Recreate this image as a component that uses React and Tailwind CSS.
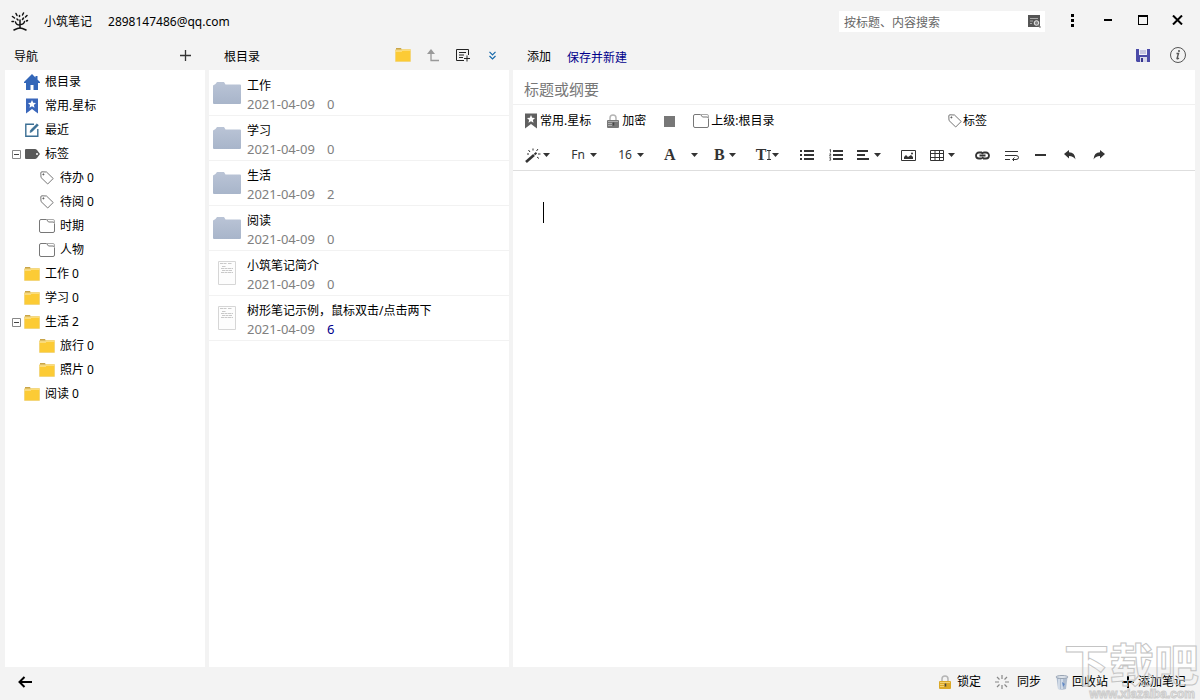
import React, { useState } from "react";

const treeItems = [
  { icon: "home", label: "根目录" },
  { icon: "star", label: "常用.星标" },
  { icon: "recent", label: "最近" },
  { icon: "solidTag", label: "标签", open: true },
  { icon: "tag", label: "待办 0", child: true },
  { icon: "tag", label: "待阅 0", child: true },
  { icon: "outline", label: "时期", child: true },
  { icon: "outline", label: "人物", child: true },
  { icon: "folder", label: "工作 0" },
  { icon: "folder", label: "学习 0" },
  { icon: "folder", label: "生活 2", open: true },
  { icon: "folder", label: "旅行 0", child: true },
  { icon: "folder", label: "照片 0", child: true },
  { icon: "folder", label: "阅读 0" },
];

const notes = [
  { title: "工作", count: 0, folder: true },
  { title: "学习", count: 0, folder: true },
  { title: "生活", count: 2, folder: true },
  { title: "阅读", count: 0, folder: true },
  { title: "小筑笔记简介", count: 0 },
  { title: "树形笔记示例，鼠标双击/点击两下", count: 6 },
];

function Folder() {
  return (
    <svg width="16" height="14" viewBox="0 0 16 14">
      <path d="M1 0h5l1 2H1z" fill="#c9a548" />
      <path d="M0 1.6h6.5l1-.6H15q1 0 1 1v11q0 1-1 1H1q-1 0-1-1z" fill="#f3d67c" />
      <path d="M1 3h6l1-1h7v11H1z" fill="#fccb35" />
      <path d="M.5 3.3h6.3l1-1h7.7" fill="none" stroke="#fbe6a0" strokeWidth=".8" />
    </svg>
  );
}

function OutlineFolder() {
  return (
    <svg width="16" height="14" viewBox="0 0 16 14" fill="none" stroke="#777">
      <path d="M.5 2Q.5.5 2 .5h5.5l2 2.5H14q1.500 0 1.500 1.500V12q0 1.500-1.500 1.500H2Q.5 13.500.5 12z" />
      <path d="M7.500.5H14q1.500 0 1.500 1.500v3" stroke="#aaa" />
    </svg>
  );
}

function Tag() {
  return (
    <svg width="14" height="14" viewBox="0 0 14 14" fill="none" stroke="#666" strokeWidth=".9">
      <path d="M.8 2Q.8.8 2 .8L6.500 1l6.700 6.500-5.500 5.500L1 6.500z" strokeLinejoin="round" />
      <circle cx="3.400" cy="3.400" r=".6" fill="#555" />
    </svg>
  );
}

function Bookmark({ color }) {
  return (
    <svg width="12" height="16" viewBox="0 0 12 16">
      <path d="M0 .5h12v15L6 11l-6 4.500z" fill={color} />
      <path d="m6 2 1.200 2.700 2.800.3-2.100 1.900.6 2.900L6 8.300 3.500 9.800l.6-2.900L2 5l2.800-.3z" fill="#fff" />
    </svg>
  );
}

function Lock({ color, light }) {
  return (
    <svg width="12" height="14" viewBox="0 0 12 14">
      <path d="M3 7V4a3 3 0 0 1 6 0v3" fill="none" stroke="#b5b5b5" strokeWidth="1.500" />
      <rect y="6" width="12" height="8" rx="1" fill={color} />
      <path d="M1 7.500h10M1 9.500h4M1 11.500h4" stroke={light} strokeWidth=".8" />
      <path d="M6.500 8.500v3" stroke="#444" strokeWidth="1.500" />
    </svg>
  );
}

function TreeIcon({ name }) {
  if (name === "folder") return <Folder />;
  if (name === "outline") return <OutlineFolder />;
  if (name === "tag") return <Tag />;
  if (name === "star") return <Bookmark color="#3a67bb" />;
  if (name === "home") {
    return (
      <svg width="16" height="16" viewBox="0 0 16 16" fill="#3366b8">
        <path d="M8 0 0 8v1h2v7h4.500v-5h3v5H14V9h2V8l-2.500-2.500V2h-2v1.500z" />
      </svg>
    );
  }
  if (name === "recent") {
    return (
      <svg width="14" height="14" viewBox="0 0 14 14" fill="none" stroke="#3b6f94" strokeWidth="1.400">
        <path d="M9 1.200H.8v12h12V6" />
        <path d="m5 9.500.6-2.500L12 .8l1.400 1.400L7 8.700z" fill="#3b6f94" strokeWidth=".6" />
      </svg>
    );
  }
  return (
    <svg width="15" height="10" viewBox="0 0 15 10">
      <path d="M1 0h9q1 0 2 1l3 4-3 4q-1 1-2 1H1q-1 0-1-1V1q0-1 1-1z" fill="#595959" />
      <circle cx="12" cy="5" r="1" fill="#fff" />
    </svg>
  );
}

function BigFolder() {
  return (
    <svg width="28" height="22" viewBox="0 0 28 22">
      <defs>
        <linearGradient id="folderFill" x1="0" y1="0" x2="0" y2="1">
          <stop offset="0" stopColor="#bac4d6" />
          <stop offset="1" stopColor="#a8b5ca" />
        </linearGradient>
      </defs>
      <path d="M0 3.500 2.500 2 4 0h7l1.500 2.500H27q1 0 1 1V21q0 1-1 1H1q-1 0-1-1z" fill="url(#folderFill)" />
    </svg>
  );
}

function Page() {
  return (
    <svg width="18" height="24" viewBox="0 0 18 24">
      <path d="M.5.5h17v23H.5z" fill="#fdfdfd" stroke="#d6d6d6" />
      <path d="M2 2.500h7M10 2.500h4M4 5.500h4M3 7.500h12M4 9.500h10M3 11.500h12" stroke="#bbb" strokeWidth=".8" strokeDasharray="3 .5" />
    </svg>
  );
}

function Caret() {
  return (
    <svg width="7" height="4" viewBox="0 0 7 4" fill="#333">
      <path d="M0 0h7L3.500 4z" />
    </svg>
  );
}

function Tool({ label, caret, children }) {
  return (
    <button type="button" aria-label={label} className="flex h-6 min-w-[15px] items-center justify-center gap-1">
      {children}
      {caret && <Caret />}
    </button>
  );
}

function Toolbar() {
  return (
    <div className="flex h-[33px] items-center gap-5 border-b border-[#dedede] px-3 pt-[2px] text-[#333]">
      <button type="button" aria-label="清除格式" className="flex h-6 items-center gap-[2px]">
        <svg width="16" height="15" viewBox="0 0 16 15" stroke="#333">
          <path d="m1 14 8-7" strokeWidth="2.600" />
          <path d="m9.500 6.500 2-1.700" strokeWidth="2" />
          <path d="M8 .5v2M3.500 2 5 4M13 1l-1.500 2M13 6h2.500M12 9l2 1.500M2 6h2" strokeWidth="1" />
        </svg>
        <Caret />
      </button>
      <Tool label="字体" caret><span className="w-4 text-xs">Fn</span></Tool>
      <Tool label="字号" caret><span className="w-4 text-xs">16</span></Tool>
      <div className="flex items-center gap-4">
        <button type="button" aria-label="颜色" className="flex h-6 w-[34px] items-center justify-between font-['Liberation_Serif'] text-base font-bold">
          A
          <Caret />
        </button>
        <Tool label="粗体" caret><span className="font-['Liberation_Serif'] text-base font-bold">B</span></Tool>
      </div>
      <button type="button" aria-label="标题" className="flex h-6 items-center font-['Liberation_Serif'] text-base font-bold">
        T
        <svg width="6" height="10" viewBox="0 0 6 10" fill="none" stroke="#333"><path d="M1 .5h4M1 9.500h4M3 .5v9" /></svg>
        <Caret />
      </button>
      <div className="flex items-center gap-[14px]">
        <Tool label="无序列表">
          <svg width="14" height="10" viewBox="0 0 14 10" fill="#333">
            <path d="M0 0h2v2H0zM0 4h2v2H0zM0 8h2v2H0zM4 0h10v2H4zM4 4h10v2H4zM4 8h10v2H4z" />
          </svg>
        </Tool>
        <Tool label="有序列表">
          <svg width="14" height="12" viewBox="0 0 14 12" fill="#333">
            <path d="M4 1h10v2H4zM4 5h10v2H4zM4 9h10v2H4z" />
            <path d="M.5 1 1.500.5V3.500M.3 5h1.700L.5 7H2.200M.3 8.700h1.500L1 10q1 0 .8 1-.5.7-1.500.2" fill="none" stroke="#333" strokeWidth=".8" />
          </svg>
        </Tool>
        <Tool label="对齐" caret>
          <svg width="13" height="10" viewBox="0 0 13 10" fill="#333"><path d="M0 0h11v2H0zM0 4h8v2H0zM0 8h12v2H0z" /></svg>
        </Tool>
      </div>
      <div className="flex items-center gap-[14px]">
        <Tool label="图片">
          <svg width="15" height="11" viewBox="0 0 15 11">
            <path d="M.5.5h14v10H.5z" fill="none" stroke="#333" />
            <path d="M3 9V7l2-2 2 2 3-2 2 2v2z" fill="#333" />
            <circle cx="11" cy="3.500" r="1" fill="#333" />
          </svg>
        </Tool>
        <Tool label="表格" caret>
          <svg width="14" height="11" viewBox="0 0 14 11" fill="none" stroke="#333">
            <path d="M.5.5h13v10H.5zM0 3.500h14M0 7.500h14M5 0v11M9.500 0v11" />
          </svg>
        </Tool>
      </div>
      <div className="flex items-center gap-[14px]">
        <Tool label="链接">
          <svg width="15" height="9" viewBox="0 0 15 9" fill="none" stroke="#333" strokeWidth="1.800">
            <path d="M7 1.500H4a3 3 0 0 0 0 6h2q1.500 0 2-1.500M8 7.500h3a3 3 0 0 0 0-6H9Q7.500 1.500 7 3M4.500 4.500h6" />
          </svg>
        </Tool>
        <Tool label="换行">
          <svg width="14" height="11" viewBox="0 0 14 11" fill="none" stroke="#333">
            <path d="M0 1.500h13M0 5.500h11q2.500 0 2.500 2t-2.500 2H8M0 9.500h5M9.500 7.500l-2 2 2 2" />
          </svg>
        </Tool>
        <Tool label="分隔线">
          <svg width="11" height="2" viewBox="0 0 11 2"><path d="M0 0h11v2H0z" fill="#333" /></svg>
        </Tool>
        <Tool label="撤销">
          <svg width="12" height="10" viewBox="0 0 12 10"><path d="M0 4 5 0v2.300q6 0 6.500 7.200Q9.500 6 5 6v2.500z" fill="#333" /></svg>
        </Tool>
        <Tool label="重做">
          <svg width="12" height="10" viewBox="0 0 12 10"><path d="M12 4 7 0v2.300q-6 0-6.500 7.200Q2.500 6 7 6v2.500z" fill="#333" /></svg>
        </Tool>
      </div>
    </div>
  );
}

function Header() {
  return (
    <header className="flex h-[42px] shrink-0 items-center pr-[5px] pl-[11px]">
      <svg width="18" height="19" viewBox="0 0 18 19" fill="none" stroke="#111" strokeWidth="1.500" strokeLinecap="round">
        <path d="M9 16V8M9 13Q5 13 4.500 10M9 12.500q4 0 4.500-3" />
        <path d="M3 18q4-2 6-2t6 2" />
        <path d="M8.500 4.500v-1M5 1.500l1 2M12.500 1 11.500 3M1.500 4.500l2 1.500M1 9.500h1.500M16 3.500 14.500 5M16.500 8.500l-1 .5M6 7l1 1M12.500 6l-1 1.500" />
      </svg>
      <h1 className="ml-[15px] pt-[2px]">小筑笔记</h1>
      <span className="ml-4 pt-[2px]">2898147486@qq.com</span>
      <div className="ml-auto flex h-[21px] w-[206px] items-center bg-white pr-1 pl-[5px]">
        <input
          aria-label="搜索"
          placeholder="按标题、内容搜索"
          className="min-w-0 flex-1 pt-[3px] text-xs placeholder:text-[#666] focus:outline-none"
        />
        <button type="button" aria-label="开始搜索">
          <svg width="13" height="13" viewBox="0 0 13 13">
            <path d="M0 0h12v12H0z" fill="#555" />
            <path d="M2 3.500h8M2 6h3M2 8.500h2" stroke="#aaa" />
            <circle cx="8.500" cy="8" r="2.300" fill="#888" stroke="#eee" />
            <path d="m10 10 2.500 2.500" stroke="#777" strokeWidth="1.500" />
          </svg>
        </button>
      </div>
      <div className="ml-[10px] flex pb-[2px]">
        <button type="button" aria-label="菜单" className="flex h-8 w-[35px] items-center justify-center">
          <svg width="3" height="13" viewBox="0 0 3 13"><path d="M0 0h3v3H0zM0 5h3v3H0zM0 10h3v3H0z" /></svg>
        </button>
        <button type="button" aria-label="最小化" className="flex h-8 w-[35px] items-center justify-center">
          <svg width="8" height="2" viewBox="0 0 8 2"><path d="M0 0h8v2H0z" /></svg>
        </button>
        <button type="button" aria-label="最大化" className="flex h-8 w-[35px] items-center justify-center">
          <svg width="10" height="10" viewBox="0 0 10 10"><path d="M0 0h10v10H0zM1 2v7h8V2z" fillRule="evenodd" /></svg>
        </button>
        <button type="button" aria-label="关闭" className="flex h-8 w-[35px] items-center justify-center">
          <svg width="11" height="10" viewBox="0 0 11 10" stroke="#000" strokeWidth="2"><path d="m1 .5 9 9M10 .5l-9 9" /></svg>
        </button>
      </div>
    </header>
  );
}

function Sidebar() {
  return (
    <nav className="flex w-[200px] shrink-0 flex-col" aria-label="导航">
      <div className="flex h-7 items-center justify-between pr-[14px] pl-[9px]">
        <h2 className="pt-[2px]">导航</h2>
        <button type="button" aria-label="新增" className="pb-[2px]">
          <svg width="11" height="11" viewBox="0 0 11 11" stroke="#333" strokeWidth="1.300"><path d="M5.500 0v11M0 5.500h11" /></svg>
        </button>
      </div>
      <ul className="flex-1 bg-white">
        {treeItems.map((item) => (
          <li key={item.label} className={item.child ? "flex h-6 items-center pl-[34px]" : "flex h-6 items-center pl-[7px]"}>
            {!item.child && (
              <span className="mr-[2px] w-[9px]">
                {item.open && (
                  <button type="button" aria-label={`折叠${item.label}`} className="block">
                    <svg width="9" height="9" viewBox="0 0 9 9" fill="none" stroke="#888">
                      <path d="M.5.5h8v8h-8z" />
                      <path d="M2 4.500h5" stroke="#444" />
                    </svg>
                  </button>
                )}
              </span>
            )}
            <button type="button" className="flex items-center">
              <span className={item.child ? "flex w-[16px] mr-[5px] justify-center" : "flex w-[18px] mr-1 justify-center"}>
                <TreeIcon name={item.icon} />
              </span>
              {item.label}
            </button>
          </li>
        ))}
      </ul>
    </nav>
  );
}

function NoteList() {
  return (
    <section className="flex w-[300px] shrink-0 flex-col">
      <div className="flex h-7 items-center justify-between pr-[11px] pl-[15px]">
        <h2 className="pt-[2px]">根目录</h2>
        <div className="flex items-center gap-4 pb-[2px]">
          <button type="button" aria-label="新建文件夹"><Folder /></button>
          <button type="button" aria-label="上一级">
            <svg width="13" height="13" viewBox="0 0 13 13" fill="none" stroke="#999" strokeWidth="1.300">
              <path d="M4 1.500v10h8" />
              <path d="M0 5 4 0l4 5z" fill="#999" stroke="none" />
            </svg>
          </button>
          <button type="button" aria-label="新建笔记">
            <svg width="14" height="13" viewBox="0 0 14 13" fill="none" stroke="#222">
              <path d="M12.500 6V.5H.5v11H8M3 3.500h7M3 6h5M3 8.500h4M11 6.500v6M8 9.500h6" />
            </svg>
          </button>
          <button type="button" aria-label="展开" className="flex w-3 justify-center">
            <svg width="7" height="9" viewBox="0 0 7 9" fill="none" stroke="#1769aa" strokeWidth="1.200">
              <path d="m.5.8 3 3 3-3M.5 5l3 3 3-3" />
            </svg>
          </button>
        </div>
      </div>
      <ul className="flex-1 bg-white pt-px">
        {notes.map((note) => (
          <li key={note.title} className="flex h-[45px] items-center border-b border-[#f2f2f2] pl-1">
            <span className="flex w-[34px] justify-center pr-[6px]">{note.folder ? <BigFolder /> : <Page />}</span>
            <div className="pt-[3px]">
              <h3 className="h-[19px] leading-[19px]">{note.title}</h3>
              <p className="flex h-[19px] gap-3 text-[13px] leading-[19px] text-[#808080]">
                2021-04-09
                <span className={note.count > 2 ? "text-[#00008b]" : ""}>{note.count}</span>
              </p>
            </div>
          </li>
        ))}
      </ul>
    </section>
  );
}

function Editor() {
  const [title, setTitle] = useState("");
  const [body, setBody] = useState("");

  return (
    <main className="flex min-w-0 flex-1 flex-col">
      <div className="flex h-7 items-center pr-[9px] pl-[14px]">
        <h2 className="pt-[2px]">添加</h2>
        <a href="#save" className="ml-4 pt-[3px] text-[#00008b]">保存并新建</a>
        <div className="ml-auto flex items-center gap-5 pb-[2px]">
          <button type="button" aria-label="保存">
            <svg width="14" height="13" viewBox="0 0 14 13">
              <path d="M0 0h14v13H1l-1-1z" fill="#4b4ba8" />
              <path d="M3 0h8v6H3z" fill="#f1f1f8" />
              <path d="M4 2h6M4 4h6" stroke="#9a9ac8" />
              <path d="M4 8h7v5H4z" fill="#d8d8ea" />
              <path d="M5 9h2v4H5z" fill="#35358c" />
            </svg>
          </button>
          <button type="button" aria-label="信息">
            <svg width="16" height="16" viewBox="0 0 16 16" fill="none" stroke="#555">
              <circle cx="8" cy="8" r="7.500" />
              <path d="M6.500 6.500h2L7 11.500q0 .8 2-.3" strokeWidth="1.400" />
              <circle cx="9" cy="4" r=".6" fill="#555" />
            </svg>
          </button>
        </div>
      </div>
      <div className="flex flex-1 flex-col bg-white">
        <div className="flex h-[35px] items-center border-b border-[#f0f0f0] px-[11px] pt-1">
          <input
            aria-label="标题"
            placeholder="标题或纲要"
            value={title}
            onChange={(e) => setTitle(e.target.value)}
            className="w-full text-[15px] placeholder:text-[#777] focus:outline-none"
          />
        </div>
        <div className="flex h-[33px] items-center px-3 pb-px">
          <div className="flex w-[423px] items-center">
            <button type="button" className="flex items-center gap-[3px]"><Bookmark color="#606060" />常用.星标</button>
            <button type="button" className="ml-4 flex items-center gap-[3px]">
              <Lock color="#777" light="#bbb" />
              加密
            </button>
            <button type="button" aria-label="背景色" className="ml-[18px] size-[11px] bg-[#777]" />
            <button type="button" className="ml-[18px] flex items-center gap-[2px]"><OutlineFolder />上级:根目录</button>
          </div>
          <button type="button" className="flex items-center gap-px"><Tag />标签</button>
        </div>
        <Toolbar />
        <div className="flex flex-1 pt-[31px] pl-[30px]">
          <span className="h-[21px] w-px bg-black" />
          <textarea
            aria-label="正文"
            value={body}
            onChange={(e) => setBody(e.target.value)}
            className="flex-1 resize-none text-base focus:outline-none"
          />
        </div>
      </div>
    </main>
  );
}

function Footer() {
  return (
    <footer className="flex h-[33px] shrink-0 items-center pr-[14px] pb-[3px] pl-[18px]">
      <button type="button" aria-label="返回">
        <svg width="14" height="12" viewBox="0 0 14 12" fill="none" stroke="#000" strokeWidth="2"><path d="M14 6H1.500M6.500 1l-5 5 5 5" /></svg>
      </button>
      <div className="ml-auto flex items-center gap-[14px]">
        <button type="button" className="flex items-center gap-[6px]">
          <Lock color="#dba928" light="#f7dc84" />
          锁定
        </button>
        <button type="button" className="flex items-center gap-2">
          <svg width="14" height="14" viewBox="0 0 14 14" stroke="#888" strokeWidth="1.200">
            <path d="M7 0v4M7 10v4M0 7h4M10 7h4M2 2l2.500 2.500M12 2 9.500 4.500M2 12l2.500-2.500M12 12 9.500 9.500" />
          </svg>
          同步
        </button>
        <button type="button" className="flex items-center gap-[3px]">
          <svg width="14" height="15" viewBox="0 0 14 15">
            <path d="m1.500 2 1.500 12q4 1.500 8 0l1.500-12z" fill="#aebccf" />
            <path d="M4 4v10M7 4v10" stroke="#dce4ef" strokeWidth="1.500" />
            <ellipse cx="7" cy="2" rx="6" ry="1.500" fill="#dfe5ec" stroke="#96a2b3" />
            <path d="m7 7 3 2-2 3z" fill="#6289c5" />
          </svg>
          回收站
        </button>
        <button type="button" className="flex items-center gap-[4px]">
          <svg width="12" height="12" viewBox="0 0 12 12" stroke="#000" strokeWidth="2"><path d="M6 0v12M0 6h12" /></svg>
          添加笔记
        </button>
      </div>
    </footer>
  );
}

export default function App() {
  return (
    <div className="relative flex h-screen flex-col overflow-hidden bg-[#f3f3f3] font-['Noto_Sans','Noto_Sans_CJK_SC',sans-serif] text-xs text-black">
      <Header />
      <div className="flex min-h-0 flex-1 gap-1 px-[5px]">
        <Sidebar />
        <NoteList />
        <Editor />
      </div>
      <Footer />
      <div className="pointer-events-none absolute right-0 bottom-0 flex flex-col items-end pr-px text-transparent">
        <span className="text-[45px] leading-[46px] font-bold [-webkit-text-stroke:1px_#c4c4c4]">下载吧</span>
        <span className="pr-1 font-['Liberation_Sans'] text-xs leading-3 font-bold [-webkit-text-stroke:1px_#cccccc]">www.xiazaiba.com</span>
      </div>
    </div>
  );
}
